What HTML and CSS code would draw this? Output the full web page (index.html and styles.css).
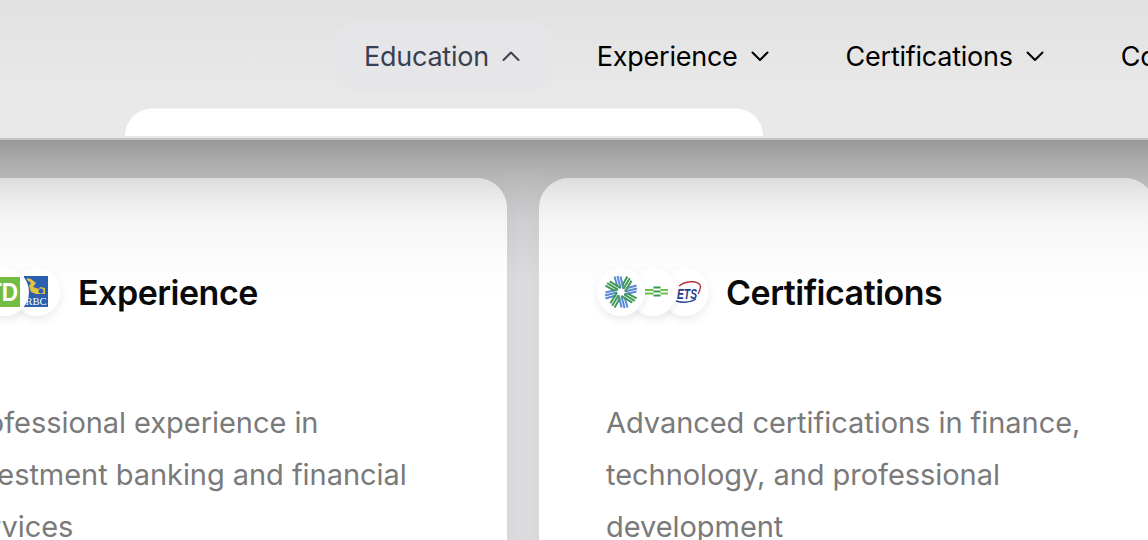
FILE: index.html
```html
<!DOCTYPE html>
<html lang="en">
<head>
    <meta charset="UTF-8">
    <meta name="viewport" content="width=device-width, initial-scale=1.0">
    <title>Portfolio</title>
    <link rel="stylesheet" href="styles.css">
</head>
<body>
    <header class="header">
        <nav class="nav">
            <a class="nav__item nav__item--open">Education
                <svg class="nav__chevron" viewBox="0 0 28 28"><path d="M6.5 18l7.5-7.500 7.500 7.500"/></svg>
            </a>
            <a class="nav__item">Experience
                <svg class="nav__chevron" viewBox="0 0 28 28"><path d="M6.500 10.500l7.500 7.500 7.500-7.500"/></svg>
            </a>
            <a class="nav__item">Certifications
                <svg class="nav__chevron" viewBox="0 0 28 28"><path d="M6.500 10.500l7.500 7.500 7.500-7.500"/></svg>
            </a>
            <a class="nav__item">Contact</a>
        </nav>
        <div class="dropdown"></div>
    </header>

    <main class="main">
        <div class="cards">
            <section class="card">
                <div class="card__head">
                    <div class="logos">
                        <span class="logo"></span>
                        <span class="logo">
                            <svg viewBox="0 0 48 48">
                                <rect x="9" y="9" width="30" height="30" fill="#74bd44"/>
                                <text x="37" y="33" class="logo__td" textLength="30" lengthAdjust="spacingAndGlyphs">TD</text>
                            </svg>
                        </span>
                        <span class="logo">
                            <svg viewBox="0 0 48 48">
                                <rect x="11" y="8" width="24" height="31" fill="#2c5fb0"/>
                                <path d="M14 10l4 1 5 4-3 4 6 2 1-2 5 1v6h-9l-5-2-2-6 2-3-4-3z" fill="#e3c440"/>
                                <circle cx="28" cy="23" r="2.500" fill="#2c5fb0"/>
                                <text x="23" y="37" class="logo__rbc" textLength="21" lengthAdjust="spacingAndGlyphs">RBC</text>
                            </svg>
                        </span>
                    </div>
                    <h2 class="card__title">Experience</h2>
                </div>
                <p class="card__text">Professional experience in investment banking and financial services</p>
            </section>

            <section class="card">
                <div class="card__head">
                    <div class="logos">
                        <span class="logo">
                            <svg viewBox="0 0 48 48">
                                <defs>
                                    <path id="wedge" d="M20.500 19L17.500 8.500M23.500 20L20.500 8M26.500 21L23.500 8.500"/>
                                </defs>
                                <g class="burst burst--blue">
                                    <use href="#wedge"/>
                                    <use href="#wedge" transform="rotate(90 24 24)"/>
                                    <use href="#wedge" transform="rotate(180 24 24)"/>
                                    <use href="#wedge" transform="rotate(270 24 24)"/>
                                </g>
                                <g class="burst burst--green">
                                    <use href="#wedge" transform="rotate(45 24 24)"/>
                                    <use href="#wedge" transform="rotate(135 24 24)"/>
                                    <use href="#wedge" transform="rotate(225 24 24)"/>
                                    <use href="#wedge" transform="rotate(315 24 24)"/>
                                </g>
                            </svg>
                        </span>
                        <span class="logo">
                            <svg viewBox="0 0 48 48">
                                <path class="bars" d="M16 22h8.500M16 25.500h8.500M31.500 22h7.500M31.500 25.500h7.500"/>
                                <path class="bars bars--dark" d="M24.500 19.500h7M24.500 23.500h7M24.500 27.500h7"/>
                            </svg>
                        </span>
                        <span class="logo">
                            <svg viewBox="0 0 48 48">
                                <path d="M18 18C24 13 36 12 39 17C40.500 20 38 24 37 26" fill="none" stroke="#b5333d" stroke-width="1.400"/>
                                <path d="M15 33C22 35 30 34 35 31" fill="none" stroke="#1f3f8f" stroke-width="1.400"/>
                                <text x="16" y="31" class="logo__ets" textLength="20" lengthAdjust="spacingAndGlyphs">ETS</text>
                            </svg>
                        </span>
                    </div>
                    <h2 class="card__title">Certifications</h2>
                </div>
                <p class="card__text">Advanced certifications in finance, technology, and professional development</p>
            </section>
        </div>
    </main>
</body>
</html>
```

FILE: styles.css
```css
* {
    box-sizing: border-box;
}

html,
body {
    margin: 0;
    height: 540px;
    overflow: hidden;
}

body {
    background-color: #dddddf;
    font-family: Inter, "Liberation Sans", sans-serif;
}

.header {
    position: relative;
    height: 140px;
    padding: 20px 0 0 332px;
    background: linear-gradient(#e1e1e1 0, #e8e8e8 80px, #e9e9e9 100%);
    border-bottom: 2px solid #c2c2c2;
}

.nav {
    display: flex;
    gap: 8px;
    width: 1000px;
}

.nav__item {
    display: flex;
    align-items: center;
    gap: 8px;
    height: 72px;
    padding: 0 32px;
    border-radius: 32px;
    color: #000;
    font-size: 27px;
    letter-spacing: -0.25px;
    white-space: nowrap;
}

.nav__item--open {
    background-color: #e6e6e9;
    color: #374151;
}

.nav__chevron {
    width: 28px;
    height: 28px;
    fill: none;
    stroke: currentColor;
    stroke-width: 2;
    stroke-linecap: round;
    stroke-linejoin: round;
}

/* the opening menu, only its top edge shows */
.dropdown {
    position: absolute;
    left: 125px;
    top: 109px;
    width: 638px;
    height: 27px;
    background-color: #fff;
    border-radius: 30px 30px 0 0;
    box-shadow: 0 -1px 0 rgba(255, 255, 255, 0.4);
}

.main {
    height: 400px;
    padding-top: 38px;
    background: linear-gradient(#999 0, #b9b9b9 38px, #d0d0d3 80px, #dddddf 140px);
}

.cards {
    display: flex;
    gap: 32px;
    margin-left: -109px;
    width: 1264px;
}

.card {
    flex: 0 0 616px;
    height: 500px;
    padding: 90px 58px 0;
    background: linear-gradient(#ddd 0, #ececec 22px, #f5f5f5 42px, #fcfcfc 80px, #fff 120px);
    border-radius: 30px;
    box-shadow: 0 4px 30px rgba(0, 0, 0, 0.04);
}

.card__head {
    display: flex;
    align-items: center;
    gap: 17px;
    height: 48px;
}

.logos {
    display: flex;
}

.logo {
    display: block;
    width: 48px;
    height: 48px;
    margin-right: -16px;
    border-radius: 50%;
    background-color: #fff;
    box-shadow: 0 4px 8px rgba(0, 0, 0, 0.08);
}

.logo:nth-child(1) {
    position: relative;
    z-index: 3;
}

.logo:nth-child(2) {
    position: relative;
    z-index: 2;
}

.logo:last-child {
    margin-right: 0;
}

.logo svg {
    display: block;
    width: 48px;
    height: 48px;
}

.logo__td {
    fill: #fff;
    font-family: "Liberation Sans", sans-serif;
    font-size: 25px;
    font-weight: 700;
    text-anchor: end;
}

.logo__rbc {
    fill: #fff;
    font-family: "Liberation Serif", serif;
    font-size: 10px;
    text-anchor: middle;
}

.logo__ets {
    fill: #1f3f8f;
    font-family: "Liberation Sans", sans-serif;
    font-size: 15px;
    font-weight: 700;
    font-style: italic;
}

.burst {
    fill: none;
    stroke-width: 2;
}

.burst--blue {
    stroke: #5b8ad6;
}

.burst--green {
    stroke: #3f9a57;
}

.bars {
    fill: none;
    stroke: #6cc24a;
    stroke-width: 2;
}

.bars--dark {
    stroke: #3b9a45;
}

.card__title {
    margin: 0;
    color: #0a0a0a;
    font-size: 34px;
    font-weight: 600;
    letter-spacing: -0.5px;
}

.card__text {
    margin: 81px 0 0 9px;
    width: 490px;
    color: #7a7a7a;
    font-size: 29px;
    letter-spacing: -0.05px;
    line-height: 52px;
}
```
